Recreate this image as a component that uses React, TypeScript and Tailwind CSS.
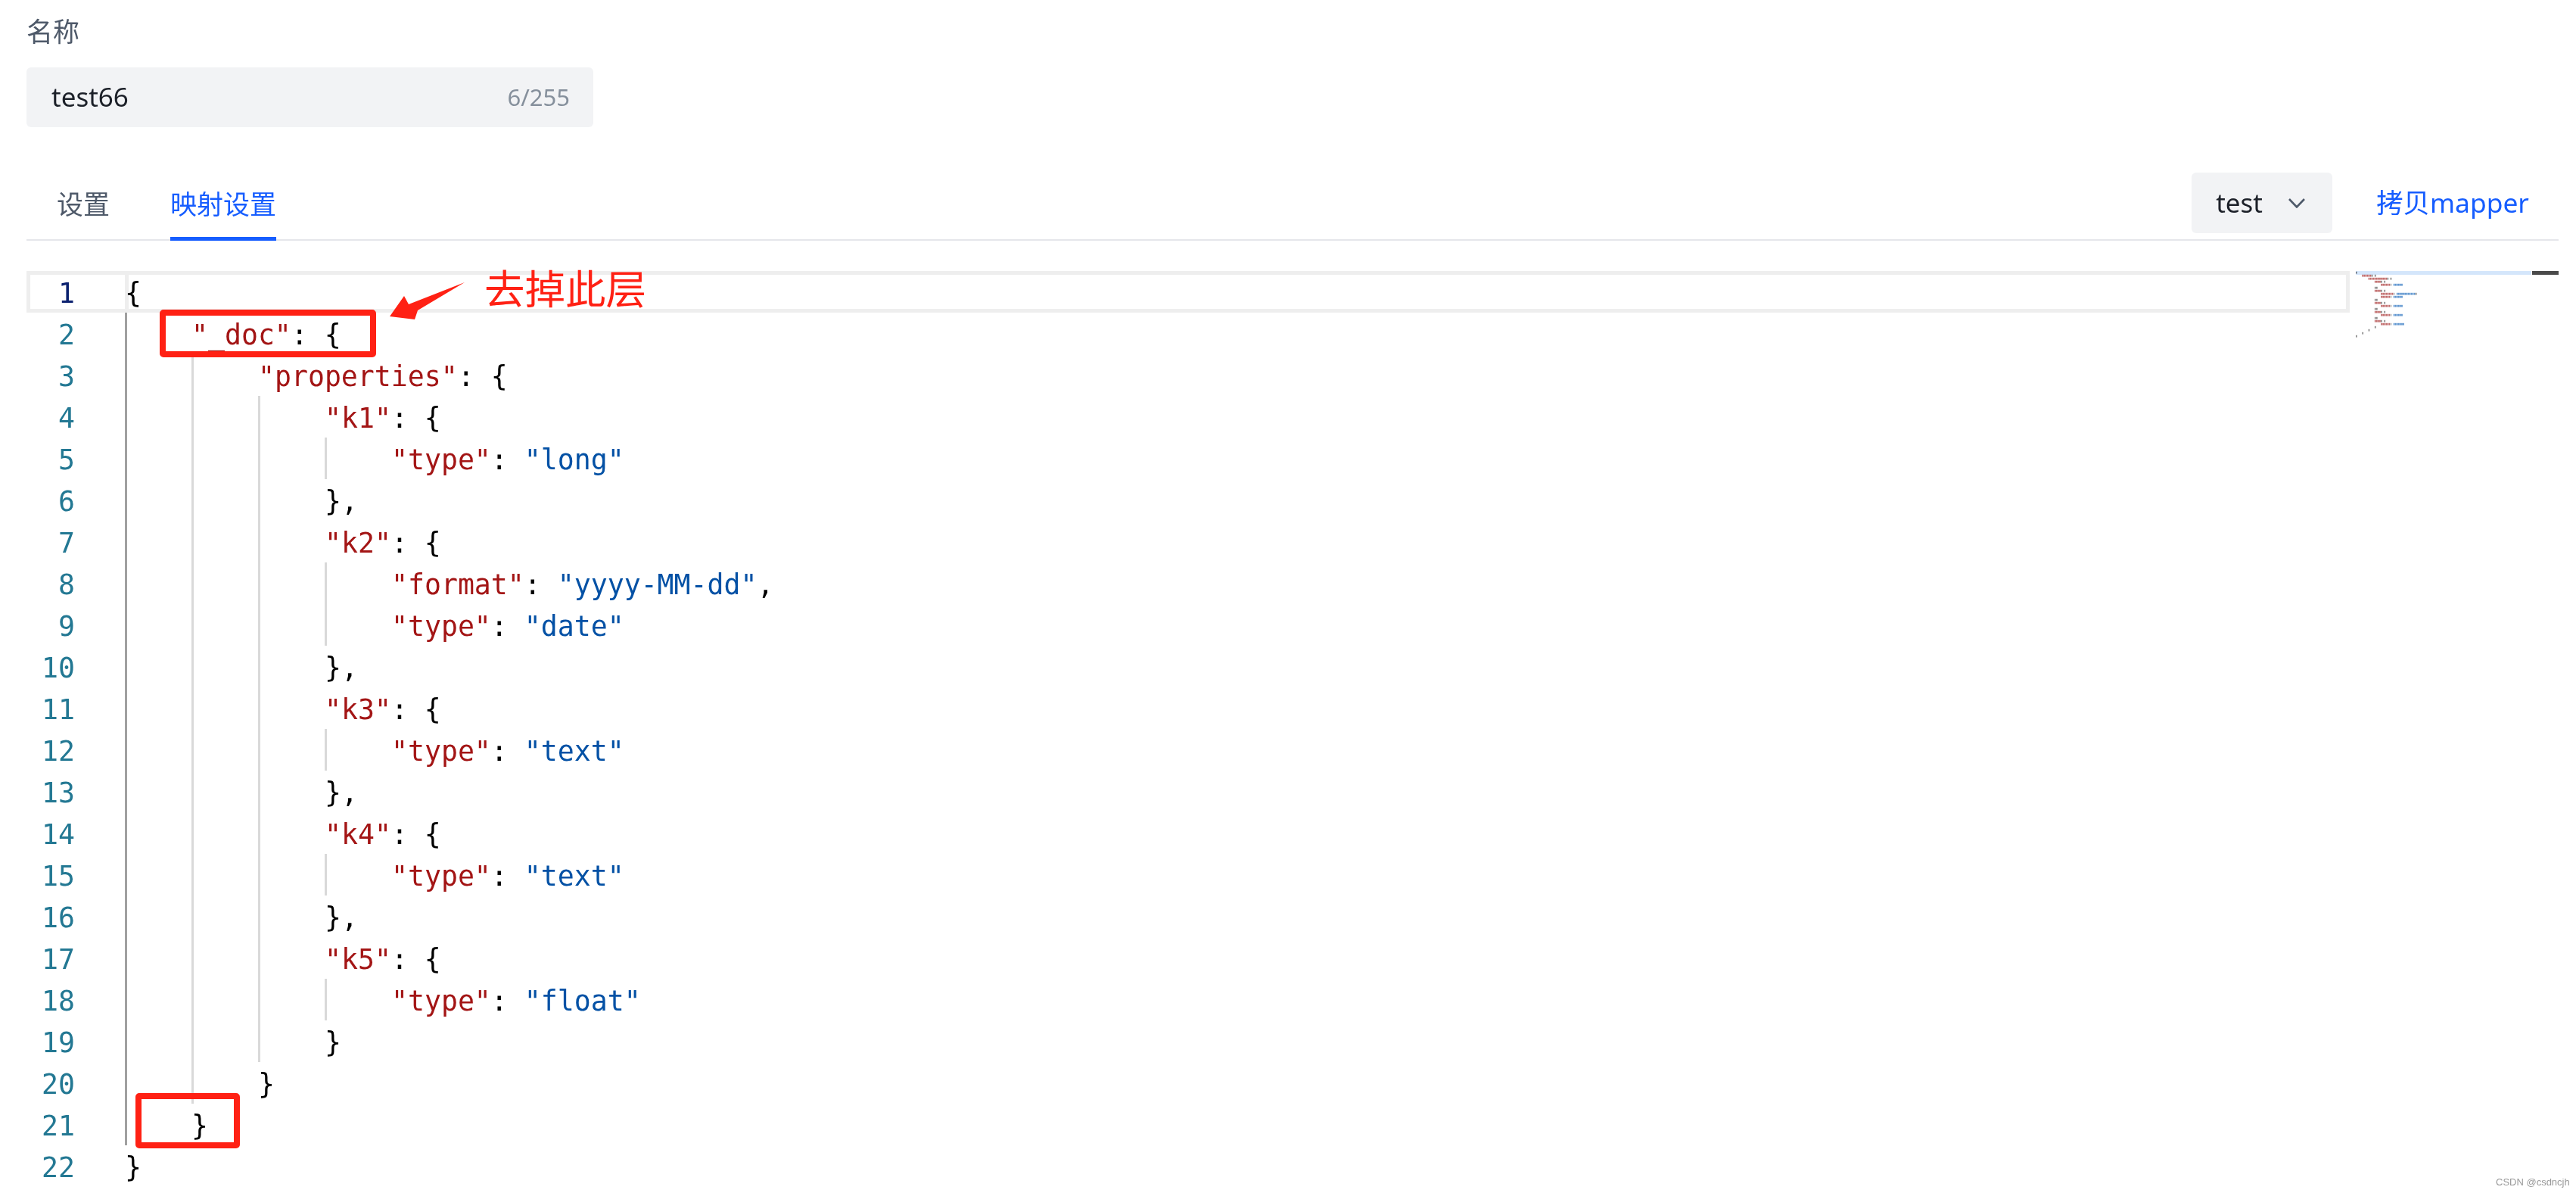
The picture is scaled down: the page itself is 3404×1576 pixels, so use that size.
const K = "text-[#a31515]";
const V = "text-[#0451a5]";

type Line = { indent: number; key?: string; value?: string; tail: string };

const lines: Line[] = [
  { indent: 0, tail: "{" },
  { indent: 1, key: '"_doc"', tail: ": {" },
  { indent: 2, key: '"properties"', tail: ": {" },
  { indent: 3, key: '"k1"', tail: ": {" },
  { indent: 4, key: '"type"', value: '"long"', tail: "" },
  { indent: 3, tail: "}," },
  { indent: 3, key: '"k2"', tail: ": {" },
  { indent: 4, key: '"format"', value: '"yyyy-MM-dd"', tail: "," },
  { indent: 4, key: '"type"', value: '"date"', tail: "" },
  { indent: 3, tail: "}," },
  { indent: 3, key: '"k3"', tail: ": {" },
  { indent: 4, key: '"type"', value: '"text"', tail: "" },
  { indent: 3, tail: "}," },
  { indent: 3, key: '"k4"', tail: ": {" },
  { indent: 4, key: '"type"', value: '"text"', tail: "" },
  { indent: 3, tail: "}," },
  { indent: 3, key: '"k5"', tail: ": {" },
  { indent: 4, key: '"type"', value: '"float"', tail: "" },
  { indent: 3, tail: "}" },
  { indent: 2, tail: "}" },
  { indent: 1, tail: "}" },
  { indent: 0, tail: "}" },
];

function CodeRow({ line, n }: { line: Line; n: number }) {
  const active = n === 1;
  return (
    <div className="relative flex h-[55px] w-full">
      {active && (
        <>
          <div className="absolute left-0 top-0 h-full w-[135px] border-[5px] border-[#eeeeee]" />
          <div className="absolute left-[130px] right-0 top-0 h-full border-[5px] border-[#eeeeee]" />
        </>
      )}
      <div
        className={`relative w-[64px] shrink-0 pt-[2px] text-right ${active ? "text-[#0b216f]" : "text-[#237893]"}`}
      >
        {n}
      </div>
      <div className="relative ml-[66px] flex h-full whitespace-pre text-black">
        {Array.from({ length: line.indent }, (_, i) => (
          <span
            key={i}
            className={`h-full w-[88px] shrink-0 border-l-[3px] ${i === 0 ? "border-[#a0a0a0]" : "border-[#d9d9d9]"}`}
          />
        ))}
        <span className="pt-[2px]">
          {line.key && <span className={K}>{line.key}</span>}
          {line.value ? (
            <>
              <span>: </span>
              <span className={V}>{line.value}</span>
            </>
          ) : null}
          <span>{line.tail}</span>
        </span>
      </div>
    </div>
  );
}

function Minimap() {
  const cw = 2.07;
  const rows: { x: number; y: number; w: number; c: string }[] = [];
  lines.forEach((l, i) => {
    const y = 0.8 + i * 4;
    let x = l.indent * 8.3;
    const push = (s: string, c: string) => {
      for (const ch of s) {
        if (ch !== " ") rows.push({ x, y, w: cw - 0.3, c });
        x += cw;
      }
    };
    if (l.key) push(l.key, "#c26e6e");
    if (l.value) {
      push(": ", "#bbbbbb");
      push(l.value, "#6197d0");
    }
    push(l.tail, "#8c8c8c");
  });
  return (
    <div className="relative h-[100px] w-[268px] shrink-0">
      <svg width="268" height="100" viewBox="0 0 268 100" className="block blur-[0.4px]">
        {rows.map((r, i) => (
          <rect key={i} x={r.x} y={r.y} width={r.w} height="2.8" fill={r.c} />
        ))}
      </svg>
      <div className="absolute left-0 top-0 flex h-[5px] w-full gap-[1px] mix-blend-multiply">
        <div className="h-full w-[232px] bg-[#d4e6fb]" />
        <div className="h-full w-[35px] bg-[#4a4a4a]" />
      </div>
    </div>
  );
}

export default function App() {
  return (
    <div className="relative h-[1576px] w-[3404px] overflow-hidden bg-white px-[35px] font-['Noto_Sans','Noto_Sans_CJK_SC',sans-serif] text-[35px]">
      <div className="flex h-[84px] items-center text-[#4e5969]">名称</div>
      <div className="mt-[5px] flex h-[79px] w-[749px] items-center justify-between rounded-[6px] bg-[#f2f3f5] pl-[33px] pr-[31px] text-[#1d2129]">
        <span>test66</span>
        <span className="text-[31px] text-[#86909c]">6/255</span>
      </div>

      <div className="mt-[60px] flex h-[90px] w-[3346px] border-b-2 border-[#e5e6eb]">
        <div className="flex gap-[80px] pl-[40px]">
          <div className="h-[90px] pt-[16px] text-[#4e5969]">设置</div>
          <div className="h-[90px] border-b-[5px] border-[#165dff] pt-[16px] text-[#165dff]">映射设置</div>
        </div>
        <div className="ml-auto flex h-[80px] w-[186px] items-center justify-between rounded-[6px] bg-[#f2f3f5] pl-[32px] pr-[36px] text-[#1d2129]">
          <span>test</span>
          <svg width="22" height="13" viewBox="0 0 22 13" fill="none">
            <path d="M1 1l10 10.5L21 1" stroke="#4e5969" strokeWidth="2.6" />
          </svg>
        </div>
        <div className="ml-[58px] mr-[39px] flex h-[80px] items-center text-[35.4px] text-[#165dff]">拷贝mapper</div>
      </div>

      <div className="mt-[40px] flex w-[3346px] font-['DejaVu_Sans_Mono',monospace] text-[36.5px] leading-[55px]">
        <div className="w-[3070px] shrink-0">
          {lines.map((l, i) => (
            <CodeRow key={i} line={l} n={i + 1} />
          ))}
        </div>
        <div className="ml-[8px]">
          <Minimap />
        </div>
      </div>

      <div className="absolute left-[211px] top-[409px] h-[63px] w-[286px] rounded-[5px] border-[8px] border-[#ff2114]" />
      <div className="absolute left-[179px] top-[1444px] h-[73px] w-[138px] rounded-[5px] border-[8px] border-[#ff2114]" />
      <svg className="absolute left-[510px] top-[368px]" width="110" height="60" viewBox="510 368 110 60">
        <path d="M515 418L534 391L540 402L614 373L552 410L548 422Z" fill="#ff2114" />
      </svg>
      <div className="absolute left-[640px] top-[339px] font-['Noto_Sans_CJK_SC',sans-serif] text-[53.5px] leading-[80px] text-[#ff2114]">
        去掉此层
      </div>

      <div className="absolute left-[3298px] top-[1552px] font-['Liberation_Sans',sans-serif] text-[13px] text-[#999999]">
        CSDN @csdncjh
      </div>
    </div>
  );
}
